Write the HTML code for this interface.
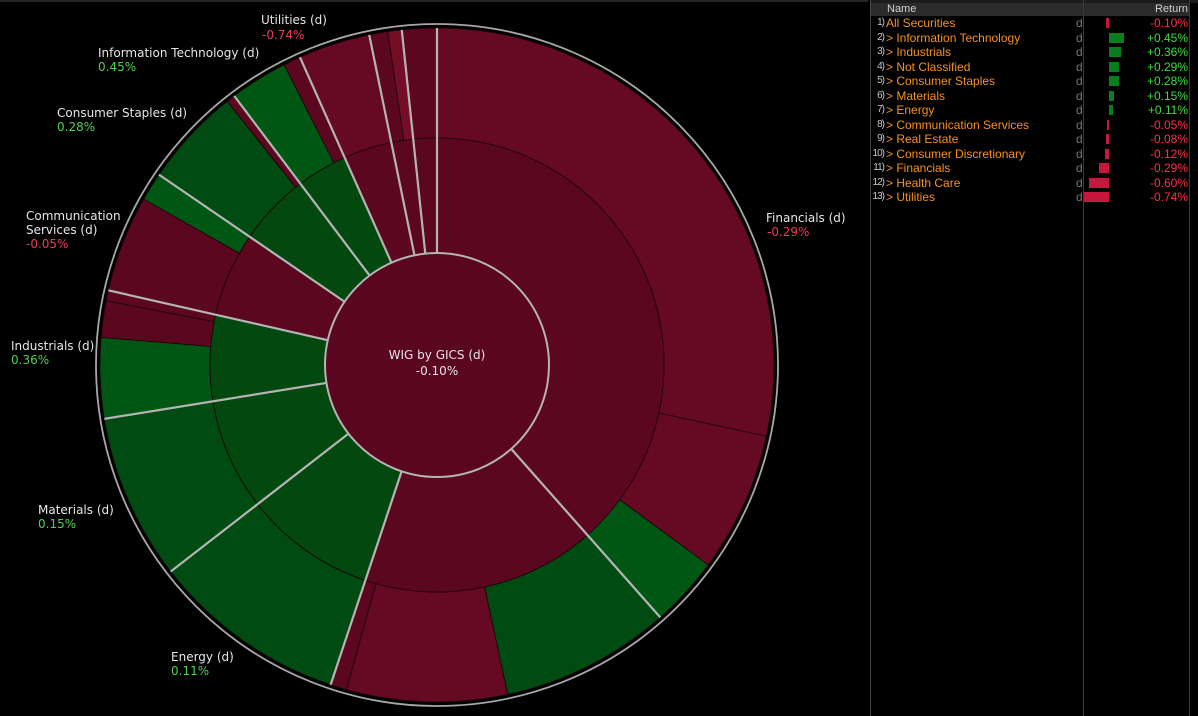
<!DOCTYPE html>
<html><head><meta charset="utf-8">
<style>
html,body{margin:0;padding:0;background:#000;width:1198px;height:716px;overflow:hidden;font-family:"Liberation Sans",sans-serif;}
#topbar{position:absolute;left:0;top:0;width:868px;height:2px;background:#262626;}
.lbl{position:absolute;font-family:"DejaVu Sans",sans-serif;font-size:12px;color:#e6e6e6;line-height:14px;white-space:nowrap;}
.g{color:#4fd14f}.r{color:#ee3a55}
#tbl{position:absolute;left:870px;top:0;width:328px;height:716px;}
#hdr{position:absolute;left:0;top:3px;width:320px;height:13px;background:#2b2b2b;}
.row{position:absolute;left:0;width:328px;height:14px;font-size:12px;line-height:14px;}
.num{position:absolute;right:314px;color:#c8c8c8;font-size:10px;letter-spacing:-1px}
.nm{position:absolute;left:16px;color:#f7911e;}
.dd{position:absolute;left:206px;color:#777;}
.val{position:absolute;right:10px;}
.bar{position:absolute;top:2px;height:10px;}
</style></head><body>
<div id="topbar"></div>
<svg id="c" width="868" height="716" style="position:absolute;left:0;top:0"></svg>

<div class="lbl" style="left:261px;top:13px">Utilities (d)</div>
<div class="lbl r" style="left:262px;top:28px">-0.74%</div>
<div class="lbl" style="left:98px;top:46px">Information Technology (d)</div>
<div class="lbl g" style="left:98px;top:60px">0.45%</div>
<div class="lbl" style="left:57px;top:106px">Consumer Staples (d)</div>
<div class="lbl g" style="left:57px;top:120px">0.28%</div>
<div class="lbl" style="left:26px;top:209px">Communication<br>Services (d)</div>
<div class="lbl r" style="left:26px;top:237px">-0.05%</div>
<div class="lbl" style="left:11px;top:339px">Industrials (d)</div>
<div class="lbl g" style="left:11px;top:353px">0.36%</div>
<div class="lbl" style="left:38px;top:503px">Materials (d)</div>
<div class="lbl g" style="left:38px;top:517px">0.15%</div>
<div class="lbl" style="left:171px;top:650px">Energy (d)</div>
<div class="lbl g" style="left:171px;top:664px">0.11%</div>
<div class="lbl" style="left:766px;top:211px">Financials (d)</div>
<div class="lbl r" style="left:767px;top:225px">-0.29%</div>
<div class="lbl" style="left:337px;top:348px;width:200px;text-align:center">WIG by GICS (d)</div>
<div class="lbl" style="left:337px;top:364px;width:200px;text-align:center">-0.10%</div>

<div id="tbl">
<div style="position:absolute;left:0;top:0;width:328px;height:3px;background:#1c1c1c"></div>
<div id="hdr"></div>
<div style="position:absolute;left:0;top:0;width:1px;height:716px;background:#444"></div>
<div style="position:absolute;left:213px;top:0;width:1px;height:716px;background:#3a3a3a"></div>
<div style="position:absolute;left:319px;top:0;width:1px;height:716px;background:#3a3a3a"></div>
<div style="position:absolute;left:17px;top:3px;font-size:11px;line-height:13px;color:#d0d0d0">Name</div>
<div style="position:absolute;right:10px;top:3px;font-size:11px;line-height:13px;color:#d0d0d0">Return</div>
<div id="rows"></div>
</div>

<script>
var NS="http://www.w3.org/2000/svg",svg=document.getElementById('c');
var cx=437,cy=365;
function pt(r,a){var t=a*Math.PI/180;return [cx+r*Math.sin(t),cy-r*Math.cos(t)];}
function seg(r0,r1,a0,a1,fill){
 var p1=pt(r1,a0),p2=pt(r1,a1),p3=pt(r0,a1),p4=pt(r0,a0),lg=(a1-a0)>180?1:0;
 var d="M"+p1+"A"+r1+","+r1+" 0 "+lg+" 1 "+p2+"L"+p3+"A"+r0+","+r0+" 0 "+lg+" 0 "+p4+"Z";
 var e=document.createElementNS(NS,'path');e.setAttribute('d',d);e.setAttribute('fill',fill);
 e.setAttribute('stroke','#1a0208');e.setAttribute('stroke-width','0.8');svg.appendChild(e);}
function line(a,r0,r1,col,w){var p=pt(r0,a),q=pt(r1,a);var e=document.createElementNS(NS,'line');
 e.setAttribute('x1',p[0]);e.setAttribute('y1',p[1]);e.setAttribute('x2',q[0]);e.setAttribute('y2',q[1]);
 e.setAttribute('stroke',col);e.setAttribute('stroke-width',w);svg.appendChild(e);}
function circ(r,fill,stroke,w){var e=document.createElementNS(NS,'circle');e.setAttribute('cx',cx);e.setAttribute('cy',cy);e.setAttribute('r',r);
 e.setAttribute('fill',fill);e.setAttribute('stroke',stroke);e.setAttribute('stroke-width',w);svg.appendChild(e);}
var R='#650a22',R2='#5b0720',R3='#740d28',G='#005714',G2='#004b12',GM='#03480f';
var RO=337,RM=227,RI=112;
circ(341,'none','#a8a8a8',1.8);
[[0,102.2,R],[102.2,126.4,R],[126.4,138.5,G],[138.5,167.9,G2],[167.9,195.6,R],[195.6,198.4,R2],
 [198.4,232.2,G2],[232.2,260.8,G2],[260.8,274.7,G],[274.7,281,R2],[281,282.8,R2],
 [282.8,299.5,R2],[299.5,304.4,G],[304.4,321.5,G2],[321.5,323,R2],[323,333,G],[333,336,R2],
 [336,348.4,R],[348.4,351.6,R2],[351.6,354,R3],[354,360,R2]].forEach(function(s){seg(RM,RO,s[0],s[1],s[2]);});
[[0,138.5,R2],[138.5,198.4,R2],[198.4,232.2,GM],[232.2,260.8,GM],[260.8,282.8,GM],
 [282.8,304.4,R2],[304.4,323,GM],[323,336,GM],[336,348.4,R2],[348.4,354,R2],[354,360,R2]].forEach(function(s){seg(RI,RM,s[0],s[1],s[2]);});
[0,138.5,198.4,232.2,260.8,282.8,304.4,323,336,348.4,354].forEach(function(a){line(a,RI,RO,'#b4b4b4',2.2);});
circ(RI,'#5a0620','#b4b4b4',2);

var rows=[["1)","All Securities",-0.10],["2)","> Information Technology",0.45],["3)","> Industrials",0.36],["4)","> Not Classified",0.29],
["5)","> Consumer Staples",0.28],["6)","> Materials",0.15],["7)","> Energy",0.11],["8)","> Communication Services",-0.05],
["9)","> Real Estate",-0.08],["10)","> Consumer Discretionary",-0.12],["11)","> Financials",-0.29],["12)","> Health Care",-0.60],["13)","> Utilities",-0.74]];
var h="";
rows.forEach(function(r,i){var top=16+i*14.5,v=r[2],w=Math.max(2,Math.round(Math.abs(v)*34)),z=239;
 var bar=v>=0?'<div class="bar" style="left:'+z+'px;width:'+w+'px;background:#0a7d1c"></div>':'<div class="bar" style="left:'+(z-w)+'px;width:'+w+'px;background:#c8163c"></div>';
 var txt=(v>=0?'+':'')+v.toFixed(2)+'%';
 h+='<div class="row" style="top:'+top+'px"><span class="num">'+r[0]+'</span><span class="nm">'+r[1]+'</span><span class="dd">d</span>'+bar+
 '<span class="val" style="color:'+(v>=0?'#3fdc3f':'#ff2f45')+'">'+txt+'</span></div>';});
document.getElementById('rows').innerHTML=h;
</script>
</body></html>
